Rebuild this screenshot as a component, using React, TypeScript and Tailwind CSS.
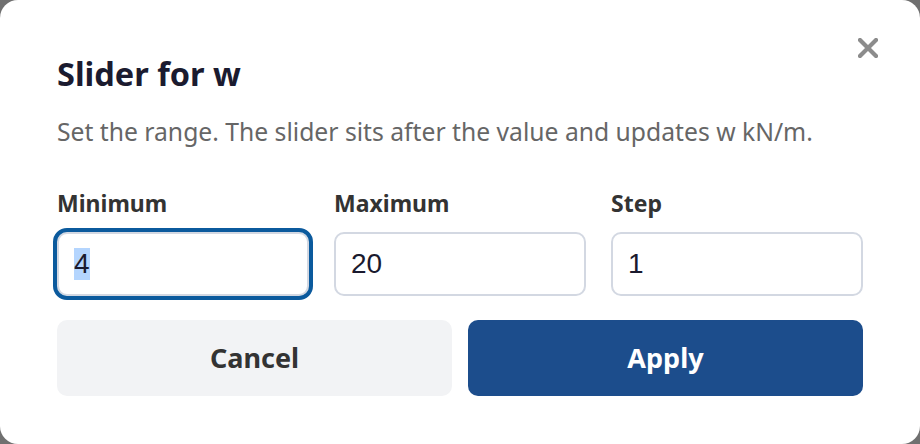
import React from "react";

const fields = [
  { label: "Minimum", value: "4", focused: true },
  { label: "Maximum", value: "20", focused: false },
  { label: "Step", value: "1", focused: false },
];

export default function App() {
  return (
    <div className="h-[444px] w-[920px] bg-[#707070]">
      <div
        className="relative h-full rounded-[18px] bg-white px-[57px] pt-[52px]"
        style={{ fontFamily: '"Noto Sans", "Open Sans", sans-serif' }}
      >
        <button type="button" className="absolute right-[42px] top-[38px] text-[#8c8c8c]">
          <svg width="20" height="20" viewBox="0 0 20 20" fill="none">
            <path d="M2 2L18 18M18 2L2 18" stroke="currentColor" strokeWidth="4.2" strokeLinecap="square" />
          </svg>
        </button>

        <h2 className="text-[32.5px] font-bold leading-[44px] text-[#1b1b2f]">Slider for w</h2>
        <p className="mt-[19px] text-[24.7px] leading-[34px] text-[#666]">
          Set the range. The slider sits after the value and updates w kN/m.
        </p>

        <div className="mt-[38px] grid grid-cols-3 gap-[25px]">
          {fields.map((f) => (
            <div key={f.label} className="flex flex-col">
              <span className="text-[23px] font-bold leading-[32px] text-[#333]">{f.label}</span>
              <div
                className={
                  "mt-[13px] flex h-[64px] items-center rounded-[10px] border-2 border-[#d3d8e2] bg-white px-[15px] text-[28px] text-[#1a1a2e] " +
                  (f.focused ? "outline-[4px] outline-offset-0 outline-[#0b5a9d] outline" : "")
                }
                style={{ fontFamily: '"Liberation Sans", Arial, sans-serif' }}
              >
                {f.focused ? <span className="bg-[#b4d5fe] leading-[32px]">{f.value}</span> : f.value}
              </div>
            </div>
          ))}
        </div>

        <div className="mt-[24px] grid grid-cols-2 gap-[16px]">
          <button type="button" className="h-[76px] rounded-[10px] bg-[#f2f3f5] text-[27px] font-bold text-[#333]">
            Cancel
          </button>
          <button type="button" className="h-[76px] rounded-[10px] bg-[#1c4d8c] text-[27px] font-bold text-white">
            Apply
          </button>
        </div>
      </div>
    </div>
  );
}
